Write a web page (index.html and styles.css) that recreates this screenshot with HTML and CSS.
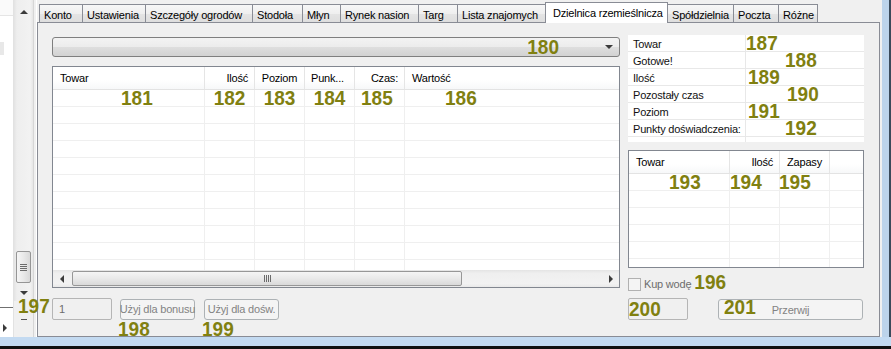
FILE: index.html
```html
<!DOCTYPE html>
<html lang="pl">
<head>
<meta charset="utf-8">
<title>Dzielnica rzemieślnicza</title>
<link rel="stylesheet" href="styles.css">
</head>
<body>
<div class="screen">
  <div class="main">
    <aside class="side">
      <div class="side-list">
        <div class="side-head"></div>
        <div class="side-mark"></div>
        <div class="side-fill"></div>
        <div class="side-rule"></div>
        <div class="side-foot"><span class="tri tri-r"></span></div>
      </div>
      <div class="side-scroll">
        <div class="vscroll">
          <span class="sbtn up"><span class="tri tri-u"></span></span>
          <div class="vtrack"><div class="vthumb"><span class="grip-h"></span></div></div>
          <span class="sbtn"><span class="tri tri-d"></span></span>
        </div>
        <span class="split-dash"></span>
      </div>
      <div class="side-sep"></div>
    </aside>

    <section class="tabctl">
      <nav class="tabs">
        <span class="tab w-konto">Konto</span>
        <span class="tab w-ustaw">Ustawienia</span>
        <span class="tab w-szcz">Szczegóły ogrodów</span>
        <span class="tab w-stod">Stodoła</span>
        <span class="tab w-mlyn">Młyn</span>
        <span class="tab w-rynek">Rynek nasion</span>
        <span class="tab w-targ">Targ</span>
        <span class="tab w-lista">Lista znajomych</span>
        <span class="tab sel w-dziel">Dzielnica rzemieślnicza</span>
        <span class="tab after-sel w-spol">Spółdzielnia</span>
        <span class="tab w-poczta">Poczta</span>
        <span class="tab last w-rozne">Różne</span>
      </nav>

      <div class="panel">
        <div class="col">
          <div class="combo">
            <b class="note n180">180</b>
            <span class="tri tri-d"></span>
          </div>

          <div class="list list-main">
            <div class="lhead cols-main">
              <span class="hc al-left">Towar</span>
              <span class="hc al-right">Ilość</span>
              <span class="hc al-center">Poziom</span>
              <span class="hc al-punk">Punk...</span>
              <span class="hc al-right">Czas:</span>
              <span class="hc al-left last-col">Wartość</span>
            </div>
            <div class="lbody">
              <div class="lrow cols-main">
                <span class="c"><b class="note n181">181</b></span>
                <span class="c al-center"><b class="note">182</b></span>
                <span class="c al-center"><b class="note">183</b></span>
                <span class="c al-center"><b class="note">184</b></span>
                <span class="c"><b class="note n185">185</b></span>
                <span class="c last-col"><b class="note n186">186</b></span>
              </div>
              <div class="lrow cols-main"><span class="c"></span><span class="c"></span><span class="c"></span><span class="c"></span><span class="c"></span><span class="c last-col"></span></div>
              <div class="lrow cols-main"><span class="c"></span><span class="c"></span><span class="c"></span><span class="c"></span><span class="c"></span><span class="c last-col"></span></div>
              <div class="lrow cols-main"><span class="c"></span><span class="c"></span><span class="c"></span><span class="c"></span><span class="c"></span><span class="c last-col"></span></div>
              <div class="lrow cols-main"><span class="c"></span><span class="c"></span><span class="c"></span><span class="c"></span><span class="c"></span><span class="c last-col"></span></div>
              <div class="lrow cols-main"><span class="c"></span><span class="c"></span><span class="c"></span><span class="c"></span><span class="c"></span><span class="c last-col"></span></div>
              <div class="lrow cols-main"><span class="c"></span><span class="c"></span><span class="c"></span><span class="c"></span><span class="c"></span><span class="c last-col"></span></div>
              <div class="lrow cols-main"><span class="c"></span><span class="c"></span><span class="c"></span><span class="c"></span><span class="c"></span><span class="c last-col"></span></div>
              <div class="lrow cols-main"><span class="c"></span><span class="c"></span><span class="c"></span><span class="c"></span><span class="c"></span><span class="c last-col"></span></div>
              <div class="lrow cols-main"><span class="c"></span><span class="c"></span><span class="c"></span><span class="c"></span><span class="c"></span><span class="c last-col"></span></div>
              <div class="lrow partial cols-main"><span class="c"></span><span class="c"></span><span class="c"></span><span class="c"></span><span class="c"></span><span class="c last-col"></span></div>
            </div>
            <div class="hscroll">
              <span class="sbtn h"><span class="tri tri-l"></span></span>
              <div class="htrack"><div class="hthumb"><span class="grip-v"></span></div></div>
              <span class="sbtn h"><span class="tri tri-r"></span></span>
            </div>
          </div>

          <div class="actions">
            <b class="note n197">197</b>
            <span class="textbox w-num"><span class="tb-text">1</span></span>
            <span class="btn w-btn">Użyj dla bonusu<b class="note under-note">198</b></span>
            <span class="btn w-btn b2">Użyj dla dośw.<b class="note under-note">199</b></span>
          </div>
        </div>

        <div class="col">
          <div class="info">
            <div class="irow"><span class="ilabel">Towar</span><span class="ival"><b class="note">187</b></span></div>
            <div class="irow"><span class="ilabel">Gotowe!</span><span class="ival far"><b class="note">188</b></span></div>
            <div class="irow"><span class="ilabel">Ilość</span><span class="ival near"><b class="note">189</b></span></div>
            <div class="irow"><span class="ilabel">Pozostały czas</span><span class="ival far2"><b class="note">190</b></span></div>
            <div class="irow"><span class="ilabel">Poziom</span><span class="ival near"><b class="note">191</b></span></div>
            <div class="irow"><span class="ilabel">Punkty doświadczenia:</span><span class="ival far"><b class="note">192</b></span></div>
            <div class="irow tail"><span class="ilabel"></span><span class="ival"></span></div>
          </div>

          <div class="list list-sub">
            <div class="lhead cols-sub">
              <span class="hc al-left">Towar</span>
              <span class="hc al-right">Ilość</span>
              <span class="hc al-center">Zapasy</span>
              <span class="hc last-col"></span>
            </div>
            <div class="lbody">
              <div class="lrow cols-sub">
                <span class="c"><b class="note n193">193</b></span>
                <span class="c"><b class="note n194">194</b></span>
                <span class="c"><b class="note n195">195</b></span>
                <span class="c last-col"></span>
              </div>
              <div class="lrow cols-sub"><span class="c"></span><span class="c"></span><span class="c"></span><span class="c last-col"></span></div>
              <div class="lrow cols-sub"><span class="c"></span><span class="c"></span><span class="c"></span><span class="c last-col"></span></div>
              <div class="lrow cols-sub"><span class="c"></span><span class="c"></span><span class="c"></span><span class="c last-col"></span></div>
              <div class="lrow cols-sub"><span class="c"></span><span class="c"></span><span class="c"></span><span class="c last-col"></span></div>
              <div class="lrow partial-sub cols-sub"><span class="c"></span><span class="c"></span><span class="c"></span><span class="c last-col"></span></div>
            </div>
          </div>

          <label class="check">
            <span class="cbox"></span>
            <span class="check-text">Kup wodę</span>
            <b class="note n196">196</b>
          </label>

          <div class="actions right">
            <span class="textbox w-num"><b class="note n200">200</b></span>
            <span class="btn w-wide"><b class="note n201">201</b><span class="btn-label">Przerwij</span><span></span></span>
          </div>
        </div>
      </div>
    </section>

    <div class="frame-r"></div>
  </div>
  <div class="frame-b"></div>
</div>
</body>
</html>
```

FILE: styles.css
```css
* { box-sizing: border-box; }
html, body { margin: 0; padding: 0; }
body {
  width: 891px;
  height: 349px;
  overflow: hidden;
  background: #f0f0f0;
  font-family: "Liberation Sans", Arial, sans-serif;
  font-size: 11px;
  letter-spacing: -0.2px;
  color: #000;
}

.screen { display: grid; grid-template-rows: 337px 12px; height: 349px; }
.main { display: grid; grid-template-columns: 37px 843px 11px; min-height: 0; }

/* ---------- left strip ---------- */
.side { display: grid; grid-template-columns: 14px 19px 4px; }
.side-list { display: flex; flex-direction: column; background: #fff; border-right: 1px solid #e2e2e2; }
.side-head { height: 16px; flex: none; border-bottom: 1px solid #e5e5e5; background: #fafafa; }
.side-mark { width: 4px; height: 13px; flex: none; margin-top: 26px; background: #e8e8e8; }
.side-fill { flex: 1; }
.side-rule { height: 1px; flex: none; background: #707070; }
.side-foot { height: 29px; flex: none; display: flex; align-items: flex-end; padding: 0 0 5px 3px; }

.side-scroll { display: flex; flex-direction: column; align-items: center; }
.vscroll {
  width: 19px; height: 301px;
  display: flex; flex-direction: column;
  background: linear-gradient(90deg, #e3e3e3, #eeeeee 15%, #f2f2f2 85%, #e6e6e6);
}
.sbtn { height: 17px; flex: none; display: flex; align-items: center; justify-content: center; }
.sbtn.up { height: 20px; padding-top: 3px; }
.sbtn.h { width: 17px; height: auto; }
.vtrack { flex: 1; display: flex; flex-direction: column; justify-content: flex-end; align-items: center; padding-bottom: 1px; }
.vthumb {
  width: 15px; height: 32px;
  border: 1px solid #959595; border-radius: 2px;
  background: linear-gradient(90deg, #f5f5f5, #e9e9e9 50%, #d9d9d9);
  display: flex; align-items: center; justify-content: center;
}
.grip-h { width: 7px; height: 7px; background: repeating-linear-gradient(#6b6b6b 0 1px, transparent 1px 2px); }
.split-dash { width: 6px; height: 1px; margin-top: 18px; background: #555; }
.side-sep { border-left: 1px solid #d6d6d6; border-right: 1px solid #fff; }

/* triangles */
.tri { display: block; width: 0; height: 0; }
.tri-u { border-left: 4px solid transparent; border-right: 4px solid transparent; border-bottom: 4px solid #3b3b3b; }
.tri-d { border-left: 4px solid transparent; border-right: 4px solid transparent; border-top: 4px solid #3b3b3b; }
.tri-l { border-top: 4px solid transparent; border-bottom: 4px solid transparent; border-right: 4px solid #3b3b3b; }
.tri-r { border-top: 4px solid transparent; border-bottom: 4px solid transparent; border-left: 4px solid #3b3b3b; }

/* ---------- tabs ---------- */
.tabctl { display: flex; flex-direction: column; }
.tabs { height: 22px; flex: none; display: flex; align-items: flex-end; padding-left: 2px; position: relative; z-index: 1; }
.tab {
  height: 18px; flex: none;
  padding: 4px 0 0 4px;
  line-height: 13px;
  border: 1px solid #898c95; border-right: 0; border-bottom: 0;
  background: linear-gradient(#f7f7f7, #efefef 50%, #e4e4e4 51%, #dedede);
  white-space: nowrap; overflow: hidden;
}
.tab.sel { height: 21px; margin-bottom: -1px; padding-left: 7px; border-right: 1px solid #898c95; background: #fff; }
.tab.after-sel { border-left: 0; }
.tab.last { border-right: 1px solid #898c95; }
.w-konto { width: 43px; }
.w-ustaw { width: 63px; }
.w-szcz { width: 107px; }
.w-stod { width: 50px; }
.w-mlyn { width: 38px; }
.w-rynek { width: 78px; }
.w-targ { width: 39px; }
.w-lista { width: 88px; }
.w-dziel { width: 123px; }
.w-spol { width: 65px; }
.w-poczta { width: 45px; }
.w-rozne { width: 40px; }

/* ---------- panel ---------- */
.panel {
  height: 315px; flex: none;
  border: 1px solid #898c95;
  background: #f0f0f0;
  display: grid; grid-template-columns: 568px 236px; column-gap: 8px;
  align-content: start;
  padding: 0 14px;
}
.col { display: flex; flex-direction: column; }

.note {
  font-family: "Liberation Sans", Arial, sans-serif;
  font-weight: 700; font-size: 19px; line-height: 17px;
  letter-spacing: 0; color: #808010;
  display: inline-block; white-space: nowrap;
  transform: scaleY(1.06);
}

/* combo */
.combo {
  margin-top: 14px; height: 20px;
  border: 1px solid #7f7f7f; border-radius: 3px;
  background: linear-gradient(#f3f3f3, #ececec 50%, #dedede 51%, #d2d2d2);
  display: flex; align-items: center; justify-content: flex-end;
  padding-right: 6px;
}
.n180 { margin-right: 46px; }

/* list views */
.list { border: 1px solid #828790; background: #fff; display: flex; flex-direction: column; }
.list-main { margin-top: 9px; height: 222px; }
.list-sub { margin-top: 8px; height: 118px; }
.lhead { height: 23px; flex: none; border-bottom: 1px solid #e3e3e3; background: linear-gradient(#fff, #fff 60%, #f7f8f9); }
.cols-main { display: grid; grid-template-columns: 152px 50px 50px 50px 50px 1fr; }
.cols-sub { display: grid; grid-template-columns: 101px 50px 50px 1fr; }
.hc { line-height: 22px; border-right: 1px solid #e5e5e5; white-space: nowrap; overflow: hidden; }
.hc.last-col, .c.last-col { border-right: 0; }
.al-left { padding-left: 7px; }
.al-right { text-align: right; padding-right: 6px; }
.al-center { text-align: center; }
.al-punk { padding-left: 6px; }
.lbody { flex: 1; min-height: 0; }
.lrow { height: 17px; border-bottom: 1px solid #efefef; }
.lrow.partial { height: 10px; border-bottom: 0; }
.lrow.partial-sub { height: 8px; border-bottom: 0; }
.c { border-right: 1px solid #efefef; white-space: nowrap; }
.n181 { margin-left: 68px; }
.n185 { margin-left: 6px; }
.n186 { margin-left: 40px; }
.n193 { margin-left: 40px; }
.n194 { margin-left: 0; }
.n195 { margin-left: -1px; }

/* horizontal scrollbar */
.hscroll {
  height: 17px; flex: none;
  display: flex;
  background: linear-gradient(#e4e4e4, #efefef 20%, #f2f2f2 80%, #e9e9e9);
}
.htrack { flex: 1; display: flex; align-items: center; padding-left: 2px; }
.hthumb {
  width: 390px; height: 15px;
  border: 1px solid #979797; border-radius: 2px;
  background: linear-gradient(#f5f5f5, #e9e9e9 50%, #d9d9d9);
  display: flex; align-items: center; justify-content: center;
}
.grip-v { width: 7px; height: 7px; background: repeating-linear-gradient(90deg, #6b6b6b 0 1px, transparent 1px 2px); }

/* info table */
.info { margin-top: 12px; height: 107px; background: #fff; }
.irow { height: 17px; display: grid; grid-template-columns: 118px 1fr; border-bottom: 1px solid #e8e8e8; }
.irow.tail { height: 5px; border-bottom: 0; }
.ilabel { border-right: 1px solid #e8e8e8; padding: 2px 0 0 5px; line-height: 14px; white-space: nowrap; color: #111; }
.ival { white-space: nowrap; }
.ival.near { padding-left: 2px; }
.ival.far { padding-left: 39px; }
.ival.far2 { padding-left: 41px; }

/* checkbox */
.check { margin-top: 8px; height: 16px; display: flex; align-items: center; color: #6d6d6d; }
.cbox { width: 13px; height: 13px; border: 1px solid #b1b1b1; background: #f4f4f4; margin-right: 3px; }
.n196 { margin-left: 3px; margin-top: -4px; }

/* action rows */
.actions { margin-top: 10px; height: 22px; display: flex; align-items: center; gap: 8px; position: relative; }
.actions.right { margin-top: 6px; gap: 30px; }
.textbox {
  height: 22px; border: 1px solid #b5b5b5; border-radius: 2px;
  background: #f0f0f0; display: flex; align-items: center;
}
.w-num { width: 60px; }
.tb-text { padding-left: 6px; color: #6d6d6d; }
.btn {
  height: 21px; border: 1px solid #adb2b5; border-radius: 3px;
  background: #f4f4f4; color: #838383;
  display: flex; align-items: center; justify-content: center;
  white-space: nowrap; position: relative;
}
.w-btn { width: 75px; }
.b2 { margin-left: 1px; }
.w-wide { width: 145px; display: grid; grid-template-columns: 1fr auto 1fr; }
.n201 { padding-left: 5px; margin-top: -4px; }
.btn-label { padding-top: 1px; }
.under-note { position: absolute; left: -3px; top: 21px; }
.n197 { position: absolute; left: -34px; top: 0; }

/* window frame */
.frame-r { background: linear-gradient(90deg, #f0f0f0 0 2px, #bcd3ea 2px 9px, #3a4a5a 9px); }
.frame-b { background: linear-gradient(#c3daf1 0 9px, #111 9px); }
```
